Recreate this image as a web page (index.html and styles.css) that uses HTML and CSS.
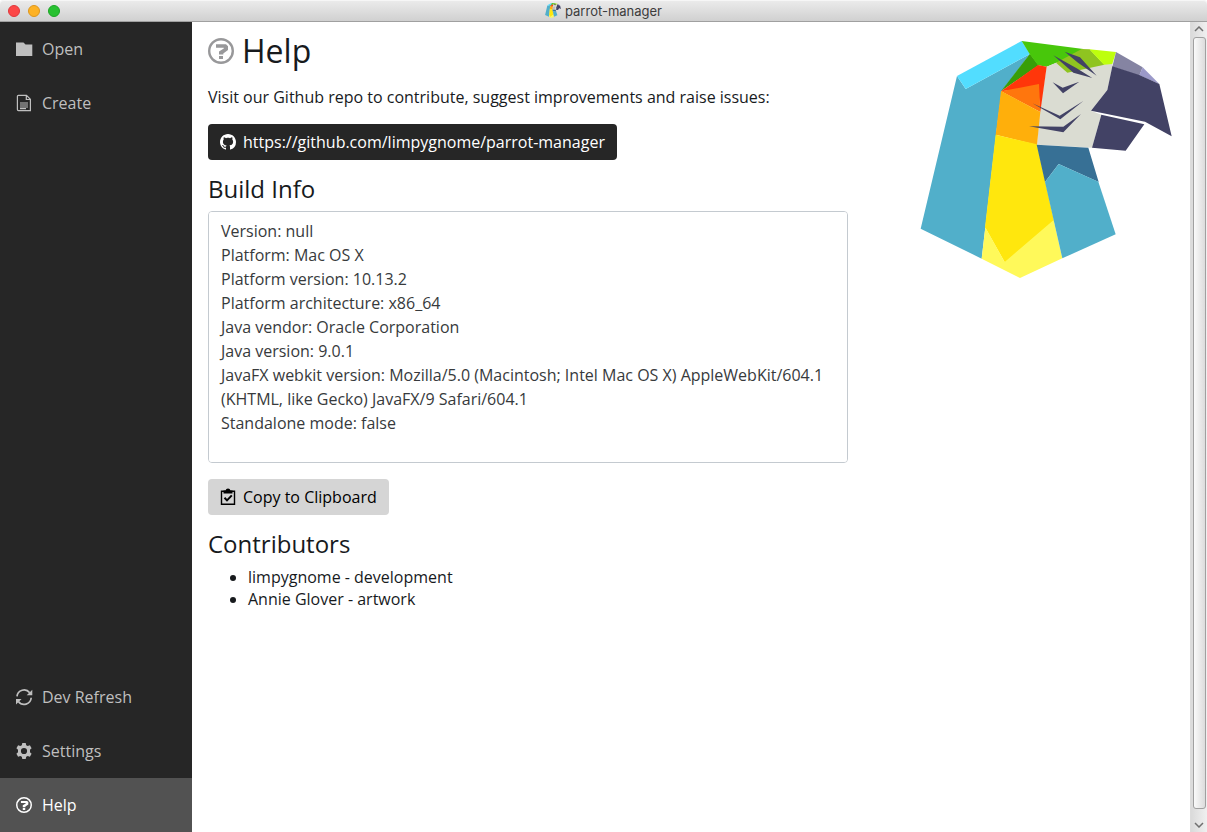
FILE: index.html
```html
<!DOCTYPE html>
<html lang="en">
<head>
<meta charset="utf-8">
<title>parrot-manager</title>
<link rel="stylesheet" href="styles.css">
</head>
<body>
<svg class="defs" aria-hidden="true">
  <symbol id="parrot" viewBox="0 0 756 714">
    <g transform="translate(300 -30)">
      <path fill="#51afca" d="M-189 138L-163 177L30 72L-55 183L-72 315L-115 686L-298 596Z"/>
      <path fill="#52ddff" d="M-189 138L5 33L30 72L-163 177Z"/>
      <path fill="#389e08" d="M30 71L56 106L-57 184Z"/>
      <path fill="#48c70b" d="M5 33L190 57L190 75L108 99L80 110L54 106L29 72Z"/>
      <path fill="#dadcd2" d="M80 110L108 98L277 100L277 110L262 180L213 242L244 254L216 353L51 344L60 240Z"/>
      <path fill="#8fc420" d="M185 57L209 58L253 104L142 128L108 98Z"/>
      <path fill="#beff0d" d="M208 58L288 66L277 102L252 104Z"/>
      <path fill="#ff360a" d="M54 105L80 110L61 246L54 170L-57 184Z"/>
      <path fill="#ff760d" d="M-57 184L57 162L61 246Z"/>
      <path fill="#ffaf0b" d="M-57 183L61 246L51 345L-73 314Z"/>
      <path fill="#ffe70d" d="M-73 314L51 343L102 572L-45 698L-105 592Z"/>
      <path fill="#fff95a" d="M-104 592L-46 696L101 570L127 685L0 744L-115 686Z"/>
      <path fill="#377095" d="M50 344L205 353L236 456L116 402L75 456Z"/>
      <path fill="#51afca" d="M75 456L116 402L235 455L287 613L127 685Z"/>
      <path fill="#8584a2" d="M288 66L368 112L358 137L277 110Z"/>
      <path fill="#9b99c9" d="M368 112L418 162L358 136Z"/>
      <path fill="#424265" d="M277 109L358 135L418 162L455 319L375 275L213 242L262 180ZM244 254L373 283L317 362L216 353Z"/>
      <path fill="#424265" d="M98 157L128 173L178 155L129 190ZM37 220L119 257L190 213L121 268ZM27 289L130 290L183 252L130 307Z"/>
      <path fill="#424265" d="M100 76L170 115L217 144L160 128ZM134 65L180 82L230 137L174 98Z"/>
    </g>
  </symbol>
  <symbol id="help" viewBox="0 0 26 26">
    <circle cx="13" cy="13" r="11.8" fill="none" stroke="currentColor" stroke-width="2.4"/>
    <path fill="currentColor" d="M8 6.3H18L20 8.3V12L15.3 15.4V16.6H11V13.6L15.8 10.4V9.8H8ZM11 18H15V21H11Z"/>
  </symbol>
</svg>

<header class="titlebar">
  <div class="lights">
    <button class="light light-close" type="button" aria-label="Close"></button>
    <button class="light light-min" type="button" aria-label="Minimize"></button>
    <button class="light light-max" type="button" aria-label="Zoom"></button>
  </div>
  <svg class="title-icon" aria-hidden="true"><use href="#parrot"/></svg>
  <span class="title">parrot-manager</span>
</header>

<div class="window">
  <nav class="sidebar">
    <a class="nav-item" href="#open">
      <svg class="icon" viewBox="0 0 16 16" aria-hidden="true"><path fill="currentColor" d="M0 1.5H7.5L9.5 3.5H16.3V15H0Z"/></svg>
      Open
    </a>
    <a class="nav-item" href="#create">
      <svg class="icon" viewBox="0 0 16 16" aria-hidden="true"><path fill="none" stroke="currentColor" stroke-width="1.2" d="M2.4 .4H10.5L14.4 4.3V15.6H2.4Q1.4 15.6 1.4 14.6V1.4Q1.4 .4 2.4 .4ZM10.3 .5V4.5H14.4"/><path stroke="currentColor" stroke-width="1.2" d="M4 8H12M4 10H12M4 12H12M4 13.6H10"/></svg>
      Create
    </a>
    <a class="nav-item nav-push" href="#refresh">
      <svg class="icon" viewBox="0 0 16 16" aria-hidden="true"><g fill="none" stroke="currentColor" stroke-width="1.7"><path d="M1 7.4A7.1 7.1 0 0 1 13.7 3.7"/><path d="M15.2 8.8A7.1 7.1 0 0 1 2.4 12.5"/></g><path fill="currentColor" d="M16.3 .7V6.2H10.7ZM0 15.5V10H5.6Z"/></svg>
      Dev Refresh
    </a>
    <a class="nav-item" href="#settings">
      <svg class="icon" viewBox="0 0 16 16" aria-hidden="true"><path fill="currentColor" fill-rule="evenodd" d="M6.3 0H9.7L10.2 2.2L11.7 3L13.9 2.3L15.6 5.2L14 6.8V9.2L15.6 10.8L13.9 13.7L11.7 13L10.2 13.8L9.7 16H6.3L5.8 13.8L4.3 13L2.1 13.7L.4 10.8L2 9.2V6.8L.4 5.2L2.1 2.3L4.3 3L5.8 2.2ZM8 4.9A3.1 3.1 0 1 0 8 11.1A3.1 3.1 0 1 0 8 4.9Z"/></svg>
      Settings
    </a>
    <a class="nav-item nav-active" href="#help-page" aria-current="page">
      <svg class="icon" aria-hidden="true"><use href="#help"/></svg>
      Help
    </a>
  </nav>

  <main class="content" id="help-page">
    <section class="details">
      <h1 class="page-title"><svg class="page-icon" aria-hidden="true"><use href="#help"/></svg>Help</h1>
      <p class="intro">Visit our Github repo to contribute, suggest improvements and raise issues:</p>
      <a class="button button-dark" href="https://github.com/limpygnome/parrot-manager">
        <svg class="icon" viewBox="0 0 16 16" aria-hidden="true"><path fill="currentColor" d="M8 0C3.58 0 0 3.58 0 8c0 3.54 2.29 6.53 5.47 7.59.4.07.55-.17.55-.38 0-.19-.01-.82-.01-1.49-2.01.37-2.53-.49-2.69-.94-.09-.23-.48-.94-.82-1.13-.28-.15-.68-.52-.01-.53.63-.01 1.08.58 1.23.82.72 1.21 1.87.87 2.33.66.07-.52.28-.87.51-1.07-1.78-.2-3.64-.89-3.64-3.95 0-.87.31-1.59.82-2.15-.08-.2-.36-1.02.08-2.12 0 0 .67-.21 2.2.82.64-.18 1.32-.27 2-.27s1.36.09 2 .27c1.53-1.04 2.2-.82 2.2-.82.44 1.1.16 1.92.08 2.12.51.56.82 1.27.82 2.15 0 3.07-1.87 3.75-3.65 3.95.29.25.54.73.54 1.48 0 1.07-.01 1.93-.01 2.2 0 .21.15.46.55.38A8.01 8.01 0 0 0 16 8c0-4.42-3.58-8-8-8z"/></svg>
        https://github.com/limpygnome/parrot-manager
      </a>
      <h2 class="section-title"><label for="build">Build Info</label></h2>
      <textarea class="build" id="build" readonly>Version: null
Platform: Mac OS X
Platform version: 10.13.2
Platform architecture: x86_64
Java vendor: Oracle Corporation
Java version: 9.0.1
JavaFX webkit version: Mozilla/5.0 (Macintosh; Intel Mac OS X) AppleWebKit/604.1 (KHTML, like Gecko) JavaFX/9 Safari/604.1
Standalone mode: false
</textarea>
      <button class="button button-light" type="button">
        <svg class="icon" viewBox="0 0 16 16" aria-hidden="true"><path fill="none" stroke="currentColor" stroke-width="1.4" d="M1.5 2.2H14.5V15.3H1.5Z"/><path fill="currentColor" d="M3.5 1.5H5.5Q6 -.5 8 -.5T10.5 1.5H12.5V4.5H3.5Z"/><path fill="none" stroke="currentColor" stroke-width="2" d="M4.5 8.8L7 11.4L11.8 6.4"/></svg>
        Copy to Clipboard
      </button>
      <h2 class="section-title">Contributors</h2>
      <ul class="people">
        <li>limpygnome - development</li>
        <li>Annie Glover - artwork</li>
      </ul>
    </section>
    <svg class="logo" viewBox="0 0 756 714" role="img" aria-label="Parrot logo"><use href="#parrot"/></svg>
  </main>

  <div class="scrollbar" aria-hidden="true">
    <svg class="arrow" viewBox="0 0 10 6"><path d="M1 5L5 1L9 5"/></svg>
    <div class="track"><div class="thumb"></div></div>
    <svg class="arrow" viewBox="0 0 10 6"><path d="M1 1L5 5L9 1"/></svg>
  </div>
</div>
</body>
</html>
```
FILE: styles.css
```css
* {
  box-sizing: border-box;
}

body {
  margin: 0;
  height: 100vh;
  display: flex;
  flex-direction: column;
  background: #fff;
  color: #171a1d;
  font: 16px/24px "Open Sans", "Noto Sans", sans-serif;
}

.defs {
  position: absolute;
  width: 0;
  height: 0;
}

.titlebar {
  flex: none;
  display: grid;
  grid-template-columns: 1fr auto auto 1fr;
  align-items: center;
  height: 22px;
  padding: 0 8px;
  border-bottom: 1px solid #a0a0a0;
  border-radius: 4px 4px 0 0;
  background: linear-gradient(#ececec, #d0d0d0);
  box-shadow: inset 0 1px #f6f6f6;
}

.lights {
  display: flex;
  gap: 8px;
}

.light {
  width: 12px;
  height: 12px;
  padding: 0;
  border: 1px solid;
  border-radius: 50%;
}

.light-close {
  background: #fc4848;
  border-color: #e0383c;
}

.light-min {
  background: #fdb225;
  border-color: #dd961c;
}

.light-max {
  background: #28c131;
  border-color: #1ca525;
}

.title-icon {
  width: 16px;
  height: 15px;
  margin-right: 4px;
}

.title {
  color: #3c3c3c;
  font: 13px/20px Inter, sans-serif;
}

.window {
  flex: 1;
  min-height: 0;
  display: flex;
}

.sidebar {
  flex: none;
  width: 192px;
  display: flex;
  flex-direction: column;
  background: #262626;
}

.nav-item {
  display: flex;
  align-items: center;
  gap: 10px;
  height: 54px;
  padding: 0 16px;
  color: #bfbfbf;
  text-decoration: none;
}

.nav-push {
  margin-top: auto;
}

.nav-active {
  background: #525252;
  color: #fff;
}

.icon {
  flex: none;
  width: 16px;
  height: 16px;
  overflow: visible;
}

.content {
  flex: 1;
  min-width: 0;
  display: flex;
  align-items: flex-start;
  gap: 72px;
  padding: 8px 18px 16px 16px;
  overflow: hidden;
}

.details {
  flex: 1;
  min-width: 0;
}

.page-title {
  display: flex;
  align-items: center;
  gap: 8px;
  margin: 0 0 13px;
  font-size: 32px;
  font-weight: 400;
  line-height: 42px;
}

.page-icon {
  width: 26px;
  height: 26px;
  color: #98989a;
}

.intro {
  margin: 0 0 15px;
}

.button {
  display: flex;
  align-items: center;
  gap: 7px;
  width: fit-content;
  height: 36px;
  padding: 0 12px;
  border: 0;
  border-radius: 4px;
  font: inherit;
  text-decoration: none;
}

.button-dark {
  background: #262626;
  color: #fff;
}

.button-light {
  background: #d5d5d5;
  color: #000;
  font-weight: 500;
}

.section-title {
  margin: 12px 0 6px;
  font-size: 24px;
  font-weight: 400;
  line-height: 33px;
}

.build {
  display: block;
  width: 100%;
  height: 252px;
  margin: 0 0 16px;
  padding: 7px 12px;
  border: 1px solid #c4cad0;
  border-radius: 4px;
  background: #fff;
  color: #373a3c;
  font: inherit;
  resize: none;
}

.people {
  margin: 0;
  padding-left: 40px;
  line-height: 22px;
}

.logo {
  flex: none;
  width: 252px;
  height: 238px;
  margin-top: 10px;
}

.scrollbar {
  flex: none;
  width: 17px;
  display: flex;
  flex-direction: column;
  align-items: center;
  gap: 5px;
  padding: 4px 1px;
  border-left: 1px solid #dcdcdc;
  background: linear-gradient(90deg, #dadada, #f0f0f0);
}

.track {
  flex: 1;
}

.thumb {
  width: 13px;
  height: 99%;
  border: 1px solid #a0a0a0;
  border-radius: 3px;
  background: linear-gradient(90deg, #fafafa, #dcdcdc);
}

.arrow {
  width: 10px;
  height: 6px;
  fill: none;
  stroke: #707070;
  stroke-width: 1.5;
}
```
